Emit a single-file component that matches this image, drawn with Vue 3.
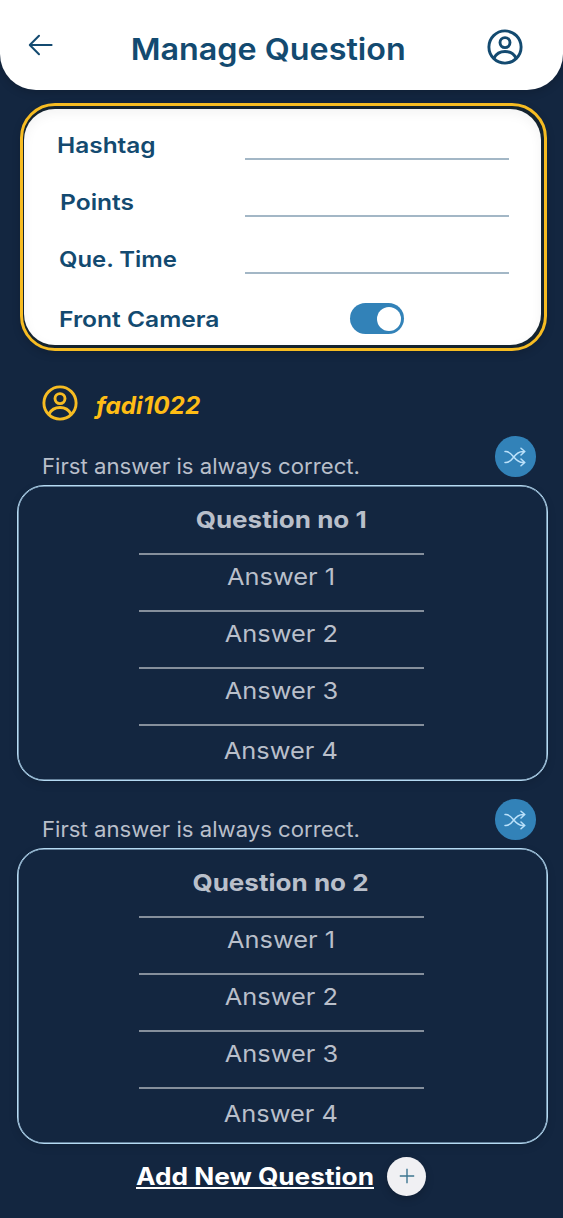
<script setup>
const fields = [
  { label: 'Hashtag', key: 'hashtag' },
  { label: 'Points', key: 'points' },
  { label: 'Que. Time', key: 'time' }
]
const questions = [
  { title: 'Question no 1', answers: ['Answer 1', 'Answer 2', 'Answer 3', 'Answer 4'] },
  { title: 'Question no 2', answers: ['Answer 1', 'Answer 2', 'Answer 3', 'Answer 4'] }
]
</script>

<template>
  <div class="screen">
    <header class="header">
      <svg class="back" width="26" height="22" viewBox="0 0 26 22">
        <path d="M11 1.8 1.8 11 11 20.2M2 11H23.6" />
      </svg>
      <h1 class="title"><span class="stretch">Manage Question</span></h1>
      <svg class="avatar" width="36" height="36" viewBox="0 0 36 36">
        <circle cx="18" cy="18" r="16.1" />
        <circle cx="18" cy="13.6" r="5" />
        <path d="M7 29C9.2 24.8 13.2 22.5 18 22.5S26.8 24.8 29 29" />
      </svg>
    </header>

    <section class="settings">
      <div class="panel">
        <div v-for="f in fields" :key="f.key" class="row">
          <span class="label" :class="f.key"><span class="stretch">{{ f.label }}</span></span>
          <span class="line"></span>
        </div>
        <div class="row last">
          <span class="label camera"><span class="stretch">Front Camera</span></span>
          <span class="toggle"><span class="knob"></span></span>
        </div>
      </div>
    </section>

    <div class="user">
      <svg class="avatar" width="36" height="36" viewBox="0 0 36 36">
        <circle cx="18" cy="18" r="16.1" />
        <circle cx="18" cy="13.6" r="5" />
        <path d="M7 29C9.2 24.8 13.2 22.5 18 22.5S26.8 24.8 29 29" />
      </svg>
      <span class="username"><span class="stretch">fadi1022</span></span>
    </div>

    <section v-for="q in questions" :key="q.title" class="question">
      <div class="hint-row">
        <span class="hint"><span class="stretch">First answer is always correct.</span></span>
        <span class="shuffle">
          <svg width="22" height="20" viewBox="0 0 22 20">
            <path d="M1 4.5H2C9 4.5 10 15.5 19 15.5H20.6M1 15.5H2C10 15.5 9 4.5 19 4.5H20.6M17 1.2 20.8 4.5 17 8M17 12 20.8 15.5 17 18.8" />
          </svg>
        </span>
      </div>
      <div class="box">
        <div class="item heading"><span class="stretch">{{ q.title }}</span></div>
        <div v-for="a in q.answers" :key="a" class="item answer"><span class="stretch">{{ a }}</span></div>
      </div>
    </section>

    <footer class="add">
      <span class="add-text"><span class="stretch">Add New Question</span></span>
      <span class="plus">
        <svg width="16" height="16" viewBox="0 0 16 16"><path d="M8 .8V15.2M.8 8H15.2" /></svg>
      </span>
    </footer>
  </div>
</template>

<style>
body { background: #132640; }
</style>

<style scoped>
.screen {
  width: 563px;
  height: 1218px;
  overflow: hidden;
  background: #132640;
  font-family: Inter, "Noto Sans", sans-serif;
  box-sizing: border-box;
}
.screen * { box-sizing: border-box; }
.stretch { display: inline-block; white-space: nowrap; transform-origin: left center; }
.header {
  width: 562.5px;
  height: 90px;
  background: #fff;
  border-radius: 0 0 36px 36px;
  display: flex;
  align-items: flex-start;
  justify-content: space-between;
  padding: 29px 39.5px 0 27.5px;
  box-shadow: 0 3px 8px rgba(0, 0, 0, .16);
}
.back { margin-top: 5px; overflow: visible; }
.back path { fill: none; stroke: #134a70; stroke-width: 2; stroke-linecap: round; stroke-linejoin: round; }
.title {
  margin: 0 0 0 -3px;
  font-size: 30px;
  line-height: 40px;
  font-weight: 600;
  color: #134a70;
}
.title .stretch { transform: translateX(-.5px) scaleX(1.077); transform-origin: center; }
.avatar { display: block; fill: none; stroke: #134a70; stroke-width: 2.9; }
.settings {
  width: 527.8px;
  height: 248px;
  margin: 13.3px 0 0 19.6px;
  border: 3px solid #f7bc22;
  border-radius: 35px;
  padding: 3px 3px 3px 1.4px;
  background: #14232f;
  box-shadow: 0 3px 8px rgba(0, 0, 0, .16);
}
.panel {
  height: 236px;
  border-radius: 31px;
  background: #fff;
  box-shadow: inset 0 4px 12px rgba(0, 0, 0, .05);
  padding: 16px 32.5px 0 33px;
}
.row {
  display: flex;
  justify-content: space-between;
  height: 57px;
}
.line { width: 264px; height: 2px; margin-top: 33px; background: #a3b7c6; }
.label { font-size: 22px; line-height: 40px; font-weight: 600; color: #134a70; }
.label .stretch { transform: scaleX(1.11); }
.points { padding-left: 3px; }
.time, .camera { padding-left: 2px; }
.time .stretch { transform: scaleX(1.085); }
.points .stretch, .camera .stretch { transform: scaleX(1.117); }
.last .label { padding-top: 3px; }
.toggle {
  width: 54px;
  height: 31px;
  margin: 7px 105px 0 0;
  padding: 3.6px 3px;
  border-radius: 16px;
  background: #3282b8;
  display: flex;
  justify-content: flex-end;
}
.knob { width: 24px; height: 24px; border-radius: 50%; background: #fff; }
.user { display: flex; height: 51px; margin: 33.7px 0 0 42px; }
.user .avatar { stroke: #f7bc22; }
.username {
  margin-left: 18px;
  font-size: 24px;
  line-height: 42px;
  font-style: italic;
  font-weight: 700;
  color: #ffbd15;
}
.username .stretch { transform: scaleX(1.013); }
.question { height: 363px; }
.question:nth-last-of-type(1) { height: 357.6px; }
.hint-row {
  display: flex;
  justify-content: space-between;
  height: 49px;
  padding: 0 27.5px 0 42.4px;
}
.hint { font-size: 21px; line-height: 62px; color: #b9bfca; }
.hint .stretch { transform: scaleX(1.055); }
.shuffle {
  width: 40.5px;
  height: 40.5px;
  margin-top: .5px;
  border-radius: 50%;
  background: #3282b8;
  display: flex;
  align-items: center;
  justify-content: center;
}
.shuffle path { fill: none; stroke: #bbe1fa; stroke-width: 1.5; stroke-linejoin: round; stroke-linecap: round; }
.box {
  width: 531px;
  height: 296px;
  margin-left: 16.5px;
  border: 1px solid #b5daf3;
  border-radius: 27px;
  padding: 12px 0 0;
  box-shadow: inset 0 0 0 .6px #b5daf3, 0 3px 8px rgba(0, 0, 0, .12);
}
.item {
  width: 285px;
  height: 57px;
  margin: 0 0 0 121px;
  text-align: center;
  font-size: 23.5px;
  line-height: 44px;
  color: #b9bfca;
  border-bottom: 2px solid #858f9c;
}
.item .stretch { transform: scaleX(1.08); transform-origin: center; }
.heading { font-weight: 700; }
.heading .stretch { transform: scaleX(1.108); }
.item:last-child { border: 0; line-height: 50px; }
.add { display: flex; height: 40px; margin: 0 0 0 136px; }
.add-text {
  width: 238px;
  font-size: 24px;
  line-height: 39px;
  font-weight: 700;
  color: #fff;
}
.add-text .stretch {
  transform: scaleX(1.092);
  text-decoration: underline;
  text-decoration-thickness: 1.5px;
  text-underline-offset: 2px;
}
.plus {
  width: 39px;
  height: 39px;
  margin-left: 13px;
  border-radius: 50%;
  background: #f0f0f3;
  display: flex;
  align-items: center;
  justify-content: center;
  box-shadow: 0 3px 8px rgba(0, 0, 0, .2);
}
.plus path { fill: none; stroke: #3d7590; stroke-width: 1.4; }
</style>
